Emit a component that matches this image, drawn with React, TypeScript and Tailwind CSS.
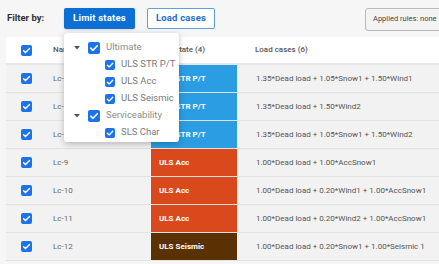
import React from "react";

type Row = { name: string; state: string; color: string; loads: string };

const rows: Row[] = [
  { name: "Lc-6", state: "ULS STR P/T", color: "bg-[#2b9de3]", loads: "1.35*Dead load + 1.05*Snow1 + 1.50*Wind1" },
  { name: "Lc-7", state: "ULS STR P/T", color: "bg-[#2b9de3]", loads: "1.35*Dead load + 1.50*Wind2" },
  { name: "Lc-8", state: "ULS STR P/T", color: "bg-[#2b9de3]", loads: "1.35*Dead load + 1.05*Snow1 + 1.50*Wind2" },
  { name: "Lc-9", state: "ULS Acc", color: "bg-[#d9491c]", loads: "1.00*Dead load + 1.00*AccSnow1" },
  { name: "Lc-10", state: "ULS Acc", color: "bg-[#d9491c]", loads: "1.00*Dead load + 0.20*Wind1 + 1.00*AccSnow1" },
  { name: "Lc-11", state: "ULS Acc", color: "bg-[#d9491c]", loads: "1.00*Dead load + 0.20*Wind2 + 1.00*AccSnow1" },
  { name: "Lc-12", state: "ULS Seismic", color: "bg-[#5a3100]", loads: "1.00*Dead load + 0.20*Snow1 + 1.00*Seismic 1" },
];

function Check({ size = "w-[11px] h-[11px]" }: { size?: string }) {
  return (
    <span className={`${size} shrink-0 rounded-[2px] bg-[#1a73e8] flex items-center justify-center`}>
      <svg viewBox="0 0 12 12" className="w-full h-full">
        <path d="M2.8 6.2 L5 8.3 L9.3 3.8" fill="none" stroke="white" strokeWidth="1.6" strokeLinecap="round" strokeLinejoin="round" />
      </svg>
    </span>
  );
}

function Caret() {
  return (
    <svg viewBox="0 0 6 4" className="w-[6px] h-[4px] shrink-0">
      <path d="M0 0 L6 0 L3 3.5 Z" fill="#555" />
    </svg>
  );
}

export default function App() {
  return (
    <div className="relative w-[439px] h-[264px] overflow-hidden bg-[#f6f6f6] text-[#555]" style={{ fontFamily: "Roboto, 'Liberation Sans', sans-serif" }}>
      {/* filter bar */}
      <div className="flex items-center h-[37px] pl-[7px] pb-[1px]">
        <span className="text-[9.5px] font-bold text-[#333] w-[57px]">Filter by:</span>
        <button className="h-[21px] w-[71px] rounded-[2px] bg-[#0b6fd4] text-white text-[9.5px] font-bold tracking-[0.2px] shadow-sm">
          Limit states
        </button>
        <button className="ml-[12px] h-[21px] w-[68px] rounded-[2px] border border-[#5e9fe0] bg-white text-[#1b6fcc] text-[9.5px] font-bold tracking-[0.2px]">
          Load cases
        </button>
        <div className="ml-auto mr-[-10px] mt-[2px] h-[23px] w-[84px] rounded-[3px] border border-[#b9b9b9] bg-[#f3f3f3] flex items-center pl-[7px] text-[7.5px] text-[#444] whitespace-nowrap">
          Applied rules: none
        </div>
      </div>

      {/* table */}
      <div className="ml-[6px]">
        <div className="grid grid-cols-[40px_105px_86px_1fr] h-[28px] bg-white items-center border-b-2 border-[#e8e8e8] text-[8px] font-medium text-[#555]">
          <div className="flex justify-center pl-[1px]"><Check /></div>
          <div className="pl-[7px]">Name</div>
          <div className="pl-[4px] whitespace-nowrap">Limit state (4)</div>
          <div className="pl-[18px]">Load cases (6)</div>
        </div>
        {rows.map((r) => (
          <div key={r.name} className="grid grid-cols-[40px_105px_86px_1fr] h-[28px] bg-[#f2f2f2] items-center border-b border-[#e2e2e2] text-[8px]">
            <div className="flex justify-center pl-[1px]"><Check /></div>
            <div className="pl-[7px] text-[#666]">{r.name}</div>
            <div className={`${r.color} h-full flex items-center pl-[8px] text-white font-bold whitespace-nowrap`}>{r.state}</div>
            <div className="pl-[19px] text-[#555] whitespace-nowrap">{r.loads}</div>
          </div>
        ))}
      </div>

      {/* dropdown */}
      <div className="absolute left-[64px] top-[33px] w-[115px] bg-white rounded-[3px] shadow-[0_2px_6px_rgba(0,0,0,0.25)] pt-[6px] pb-[1px] text-[9.5px] whitespace-nowrap">
        <div className="flex items-center h-[17px] pl-[10px] gap-[8px]">
          <Caret />
          <Check size="w-[12px] h-[12px]" />
          <span className="ml-[-2px] text-[#8c8c8c]">Ultimate</span>
        </div>
        {["ULS STR P/T", "ULS Acc", "ULS Seismic"].map((t) => (
          <div key={t} className="flex items-center h-[17px] pl-[41px] gap-[6px]">
            <Check size="w-[10px] h-[10px]" />
            <span className="text-[#7a7a7a]">{t}</span>
          </div>
        ))}
        <div className="flex items-center h-[17px] pl-[10px] gap-[8px]">
          <Caret />
          <Check size="w-[12px] h-[12px]" />
          <span className="ml-[-2px] text-[#8c8c8c]">Serviceability</span>
        </div>
        <div className="flex items-center h-[17px] pl-[41px] gap-[6px]">
          <Check size="w-[10px] h-[10px]" />
          <span className="text-[#7a7a7a]">SLS Char</span>
        </div>
      </div>
    </div>
  );
}
